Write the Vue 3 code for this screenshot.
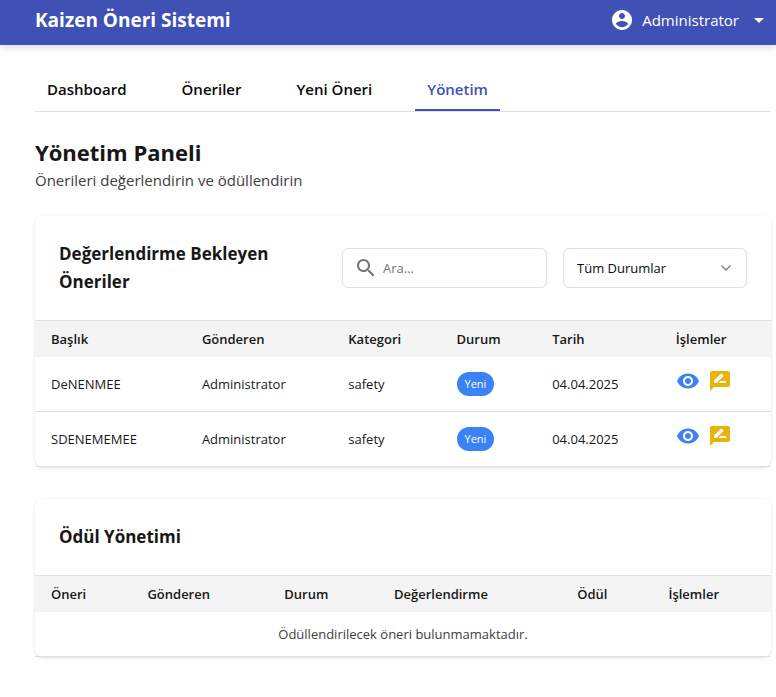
<script setup>
import { ref, computed } from 'vue'

const tabs = ['Dashboard', 'Öneriler', 'Yeni Öneri', 'Yönetim']
const activeTab = ref('Yönetim')

const search = ref('')
const status = ref('')

const pendingColumns = [
  { label: 'Başlık', width: 20.5 },
  { label: 'Gönderen', width: 19.9 },
  { label: 'Kategori', width: 14.7 },
  { label: 'Durum', width: 13 },
  { label: 'Tarih', width: 16.8 },
  { label: 'İşlemler', width: 15.1 },
]

const rewardColumns = [
  { label: 'Öneri', width: 13.1 },
  { label: 'Gönderen', width: 18.6 },
  { label: 'Durum', width: 14.9 },
  { label: 'Değerlendirme', width: 24.9 },
  { label: 'Ödül', width: 12.4 },
  { label: 'İşlemler', width: 16.1 },
]

const suggestions = [
  { id: 1, title: 'DeNENMEE', sender: 'Administrator', category: 'safety', status: 'Yeni', date: '04.04.2025' },
  { id: 2, title: 'SDENEMEMEE', sender: 'Administrator', category: 'safety', status: 'Yeni', date: '04.04.2025' },
]

const visible = computed(() =>
  suggestions.filter(
    (s) =>
      s.title.toLowerCase().includes(search.value.toLowerCase()) &&
      (!status.value || s.status === status.value)
  )
)
</script>

<template>
  <div class="page">
    <header class="topbar">
      <div class="brand">Kaizen Öneri Sistemi</div>
      <button class="user" type="button">
        <svg class="icon" viewBox="0 0 24 24" aria-hidden="true">
          <path d="M12 2C6.48 2 2 6.48 2 12s4.48 10 10 10 10-4.48 10-10S17.52 2 12 2zm0 3c1.66 0 3 1.34 3 3s-1.34 3-3 3-3-1.34-3-3 1.34-3 3-3zm0 14.2c-2.5 0-4.71-1.28-6-3.22.03-1.99 4-3.08 6-3.08 1.99 0 5.97 1.09 6 3.08-1.29 1.94-3.5 3.22-6 3.22z" />
        </svg>
        <span>Administrator</span>
        <svg class="icon" viewBox="0 0 24 24" aria-hidden="true"><path d="M7 10l5 5 5-5z" /></svg>
      </button>
    </header>

    <main class="content">
      <nav class="tabs">
        <a
          v-for="tab in tabs"
          :key="tab"
          href="#"
          class="tab"
          :class="{ active: tab === activeTab }"
          @click.prevent="activeTab = tab"
        >{{ tab }}</a>
      </nav>

      <div class="intro">
        <h1>Yönetim Paneli</h1>
        <p>Önerileri değerlendirin ve ödüllendirin</p>
      </div>

      <section class="card">
        <div class="card-head">
          <h2>Değerlendirme Bekleyen Öneriler</h2>
          <div class="filters">
            <label class="search">
              <svg class="icon" viewBox="0 0 24 24" aria-hidden="true">
                <path d="M15.5 14h-.79l-.28-.27C15.41 12.59 16 11.11 16 9.5 16 5.91 13.09 3 9.5 3S3 5.91 3 9.5 5.91 16 9.5 16c1.61 0 3.09-.59 4.23-1.57l.27.28v.79l5 4.99L20.49 19l-4.99-5zm-6 0C7.01 14 5 11.99 5 9.5S7.01 5 9.5 5 14 7.01 14 9.5 11.99 14 9.5 14z" />
              </svg>
              <input v-model="search" type="text" placeholder="Ara..." aria-label="Ara" />
            </label>
            <div class="select">
              <select v-model="status" aria-label="Durum">
                <option value="">Tüm Durumlar</option>
                <option value="Yeni">Yeni</option>
              </select>
              <svg class="chevron" viewBox="0 0 12 12" aria-hidden="true"><path d="M1.5 3.5L6 8l4.5-4.5" /></svg>
            </div>
          </div>
        </div>
        <table>
          <colgroup>
            <col v-for="c in pendingColumns" :key="c.label" :style="{ width: c.width + '%' }" />
          </colgroup>
          <thead>
            <tr><th v-for="c in pendingColumns" :key="c.label" scope="col">{{ c.label }}</th></tr>
          </thead>
          <tbody>
            <tr v-for="s in visible" :key="s.id" class="entry">
              <td>{{ s.title }}</td>
              <td>{{ s.sender }}</td>
              <td>{{ s.category }}</td>
              <td><span class="badge">{{ s.status }}</span></td>
              <td>{{ s.date }}</td>
              <td>
                <div class="actions">
                  <button type="button" class="view" aria-label="Görüntüle">
                    <svg class="icon" viewBox="0 0 24 24">
                      <path d="M12 4.5C7 4.5 2.73 7.61 1 12c1.73 4.39 6 7.5 11 7.5s9.27-3.11 11-7.5c-1.73-4.39-6-7.5-11-7.5zM12 17c-2.76 0-5-2.24-5-5s2.24-5 5-5 5 2.24 5 5-2.24 5-5 5zm0-8c-1.66 0-3 1.34-3 3s1.34 3 3 3 3-1.34 3-3-1.34-3-3-3z" />
                    </svg>
                  </button>
                  <button type="button" class="review" aria-label="Değerlendir">
                    <svg class="icon" viewBox="0 0 24 24">
                      <path d="M20 2H4c-1.1 0-1.99.9-1.99 2L2 22l4-4h14c1.1 0 2-.9 2-2V4c0-1.1-.9-2-2-2zM6 14v-2.47l6.88-6.88c.2-.2.51-.2.71 0l1.77 1.77c.2.2.2.51 0 .71L8.47 14H6zm12 0h-7.5l2-2H18v2z" />
                    </svg>
                  </button>
                </div>
              </td>
            </tr>
          </tbody>
        </table>
      </section>

      <section class="card">
        <div class="card-head">
          <h2>Ödül Yönetimi</h2>
        </div>
        <table>
          <colgroup>
            <col v-for="c in rewardColumns" :key="c.label" :style="{ width: c.width + '%' }" />
          </colgroup>
          <thead>
            <tr><th v-for="c in rewardColumns" :key="c.label" scope="col">{{ c.label }}</th></tr>
          </thead>
          <tbody>
            <tr>
              <td class="empty" :colspan="rewardColumns.length">Ödüllendirilecek öneri bulunmamaktadır.</td>
            </tr>
          </tbody>
        </table>
      </section>
    </main>
  </div>
</template>

<style>
body {
  background: #fefefe;
}
</style>

<style scoped>
.page {
  font-family: 'Segoe UI', 'Open Sans', 'Noto Sans', sans-serif;
  font-size: 13px;
  line-height: 20px;
  color: #171717;
}

h1,
h2,
p {
  margin: 0;
}

button {
  border: 0;
  padding: 0;
  background: none;
  font: inherit;
  cursor: pointer;
}

.icon {
  display: block;
  flex: none;
  width: 24px;
  height: 24px;
  fill: currentColor;
}

.topbar {
  display: flex;
  align-items: center;
  justify-content: space-between;
  padding: 4px 5px 9px 35px;
  background: #3f51b5;
  color: #fff;
  box-shadow: 0 2px 8px rgba(0, 0, 0, 0.15);
}

.brand {
  font-size: 19px;
  line-height: 32px;
  font-weight: 700;
}

.user {
  display: flex;
  align-items: center;
  gap: 8px;
  color: #fff;
  font-size: 15px;
  line-height: 24px;
}

.content {
  padding: 24px 5px 40px 35px;
}

.tabs {
  display: flex;
  gap: 31px;
  border-bottom: 1px solid #e0e0e0;
}

.tab {
  padding: 8px 12px;
  border-bottom: 2px solid transparent;
  color: #0a0a0a;
  font-size: 15px;
  line-height: 24px;
  font-weight: 600;
  text-decoration: none;
}

.tab.active {
  border-bottom-color: #3f51b5;
  color: #3f51b5;
}

.intro {
  padding: 24px 0;
}

h1 {
  font-size: 22px;
  line-height: 32px;
  font-weight: 700;
}

.intro p {
  font-size: 15px;
  line-height: 24px;
  color: #404040;
}

.card {
  border-radius: 8px;
  background: #fff;
  box-shadow: 0 1px 3px rgba(0, 0, 0, 0.12);
}

.card + .card {
  margin-top: 32px;
}

.card-head {
  display: flex;
  align-items: center;
  justify-content: space-between;
  gap: 16px;
  padding: 24px;
}

h2 {
  flex: 0 1 240px;
  font-size: 17px;
  line-height: 28px;
  font-weight: 700;
}

.filters {
  display: flex;
  gap: 16px;
}

.search,
.select {
  box-sizing: border-box;
  display: flex;
  align-items: center;
  height: 40px;
  border: 1px solid #e0e0e0;
  border-radius: 6px;
  background: #fff;
}

.search {
  width: 205px;
  gap: 5px;
  padding: 0 11px;
  color: #737373;
}

.search input {
  flex: 1;
  min-width: 0;
  border: 0;
  padding: 0;
  outline: 0;
  background: none;
  font: inherit;
  color: #171717;
}

.search input::placeholder {
  color: #757575;
  opacity: 1;
}

.select {
  position: relative;
  width: 184px;
}

.select select {
  width: 100%;
  height: 100%;
  border: 0;
  padding: 0 36px 0 13px;
  outline: 0;
  appearance: none;
  background: none;
  font: inherit;
  color: #0a0a0a;
}

.chevron {
  position: absolute;
  right: 14px;
  width: 12px;
  height: 12px;
  fill: none;
  stroke: #808080;
  stroke-width: 1.4;
  pointer-events: none;
}

table {
  width: 100%;
  table-layout: fixed;
  border-collapse: separate;
  border-spacing: 0;
}

th {
  padding: 8px 16px;
  border-top: 1px solid #e0e0e0;
  background: #f4f4f4;
  font-weight: 600;
  text-align: left;
}

td {
  padding: 12px 16px;
  border-bottom: 1px solid #e0e0e0;
}

.entry td {
  padding: 11px 16px;
  height: 32px;
}

.badge {
  display: inline-block;
  padding: 2px 8px;
  border-radius: 12px;
  background: #3b82f6;
  color: #fff;
  font-size: 11px;
  vertical-align: middle;
}

.actions {
  display: flex;
  gap: 8px;
  padding-bottom: 6px;
}

.view {
  color: #3b82f6;
}

.review {
  color: #eab308;
}

.empty {
  color: #404040;
  text-align: center;
}
</style>
